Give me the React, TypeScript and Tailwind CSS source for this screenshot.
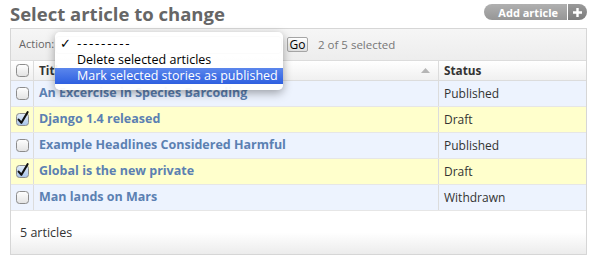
import React from "react";

type Article = { title: string; status: string; checked: boolean };

const articles: Article[] = [
  { title: "An Excercise in Species Barcoding", status: "Published", checked: false },
  { title: "Django 1.4 released", status: "Draft", checked: true },
  { title: "Example Headlines Considered Harmful", status: "Published", checked: false },
  { title: "Global is the new private", status: "Draft", checked: true },
  { title: "Man lands on Mars", status: "Withdrawn", checked: false },
];

const Checkbox = ({ checked }: { checked: boolean }) => (
  <svg width="13" height="13" viewBox="0 0 13 13" className="overflow-visible">
    <defs>
      <linearGradient id="cbOff" x1="0" y1="0" x2="0" y2="1">
        <stop offset="0" stopColor="#ffffff" />
        <stop offset="1" stopColor="#e2e2e2" />
      </linearGradient>
      <linearGradient id="cbOn" x1="0" y1="0" x2="0" y2="1">
        <stop offset="0" stopColor="#e4eefb" />
        <stop offset="1" stopColor="#a8c4ea" />
      </linearGradient>
    </defs>
    <rect x="0.5" y="0.5" width="12" height="12" rx="3" fill={checked ? "url(#cbOn)" : "url(#cbOff)"} stroke="#8c8c8c" />
    {checked && (
      <path d="M2.6 6.6 L5.4 9.8 L11.6 -0.8" fill="none" stroke="#111" strokeWidth="2.1" strokeLinecap="round" strokeLinejoin="round" />
    )}
  </svg>
);

const App = () => {
  return (
    <div className="relative w-[591px] h-[261px] overflow-hidden bg-white font-['Open_Sans',sans-serif]">
      {/* page heading */}
      <div className="flex items-start justify-between h-[28px] pl-[10px] pr-[4px]">
        <h1 className="pt-[2px] text-[18.5px] leading-[24px] font-bold text-[#666]">Select article to change</h1>
        <div className="flex mt-[4px] h-[16px]">
          <span className="flex items-center pl-[14px] pr-[9px] rounded-l-full bg-gradient-to-b from-[#b0b0b0] to-[#969696] text-white text-[11px] font-bold leading-none">
            Add article
          </span>
          <span className="w-[1px] bg-white" />
          <span className="flex items-center justify-center w-[19px] rounded-r-full bg-gradient-to-b from-[#9a9a9a] to-[#7c7c7c]">
            <svg width="11" height="11" viewBox="0 0 11 11">
              <path d="M5.5 1 V10 M1 5.5 H10" stroke="#fff" strokeWidth="2.4" />
            </svg>
          </span>
        </div>
      </div>

      {/* changelist box */}
      <div className="ml-[10px] w-[577px] border border-[#d6d6d6]">
        <div className="flex items-center h-[32px] pl-[8px] border-b border-[#dcdcdc] bg-gradient-to-b from-[#f6f6f6] to-[#ededed]">
          <span className="w-[36px] text-[11px] text-[#666]">Action:</span>
          <div className="w-[227px] h-[18px] rounded-[4px] border border-[#aaa] bg-white" />
          <button className="ml-[5px] w-[21px] h-[15px] flex items-center justify-center rounded-[2px] border border-[#a5a5a5] bg-gradient-to-b from-white to-[#dedede] text-[12px] leading-none text-black">
            Go
          </button>
          <span className="ml-[10px] text-[11.5px] text-[#777]">2 of 5 selected</span>
        </div>

        <div className="grid grid-cols-[23px_405px_1fr] h-[20px] border-b border-[#dcdcdc] bg-gradient-to-b from-white to-[#f0f0f0] text-[11.8px] font-bold text-[#333]">
          <div className="flex items-center pl-[5px] border-r border-[#dcdcdc]">
            <Checkbox checked={false} />
          </div>
          <div className="flex items-center justify-between pl-[5px] pr-[8px] border-r border-[#dcdcdc]">
            <span>Title</span>
            <svg width="9" height="5" viewBox="0 0 9 5">
              <path d="M0 5 L4.5 0 L9 5 Z" fill="#b5b5b5" />
            </svg>
          </div>
          <div className="flex items-center pl-[5px]">Status</div>
        </div>

        {articles.map((a) => (
          <div
            key={a.title}
            className={`grid grid-cols-[23px_405px_1fr] h-[26px] border-b border-[#e6e6e6] ${a.checked ? "bg-[#ffffcc]" : "bg-[#edf3fe]"}`}
          >
            <div className="flex items-center pl-[5px] border-r border-[#dcdcdc]">
              <Checkbox checked={a.checked} />
            </div>
            <div className="flex items-center pl-[5px] border-r border-[#dcdcdc] text-[12.5px] font-bold text-[#5b80b2]">
              {a.title}
            </div>
            <div className="flex items-center pl-[5px] text-[12px] text-[#333]">{a.status}</div>
          </div>
        ))}

        <div className="flex items-center h-[43px] pl-[9px] pt-[2px] bg-gradient-to-b from-white via-white to-[#ececec] text-[12.5px] text-[#333]">
          5 articles
        </div>
      </div>

      {/* open action menu */}
      <div className="absolute left-[55px] top-[32px] w-[228px] pt-[3px] pb-[6px] rounded-[5px] bg-white/95 shadow-[0_3px_10px_rgba(0,0,0,0.35)] text-[12.5px] text-black">
        <div className="flex items-center h-[17px]">
          <span className="w-[22px] pl-[5px] text-[13px] font-bold font-['DejaVu_Sans',sans-serif]">✓</span>
          <span className="text-[12px] tracking-[1.7px] font-['DejaVu_Sans',sans-serif]">---------</span>
        </div>
        <div className="flex items-center h-[16px] pl-[22px]">Delete selected articles</div>
        <div className="flex items-center h-[16px] pl-[22px] bg-gradient-to-b from-[#5b86ec] to-[#2d5fe0] text-white">
          Mark selected stories as published
        </div>
      </div>
    </div>
  );
};

export default App;
